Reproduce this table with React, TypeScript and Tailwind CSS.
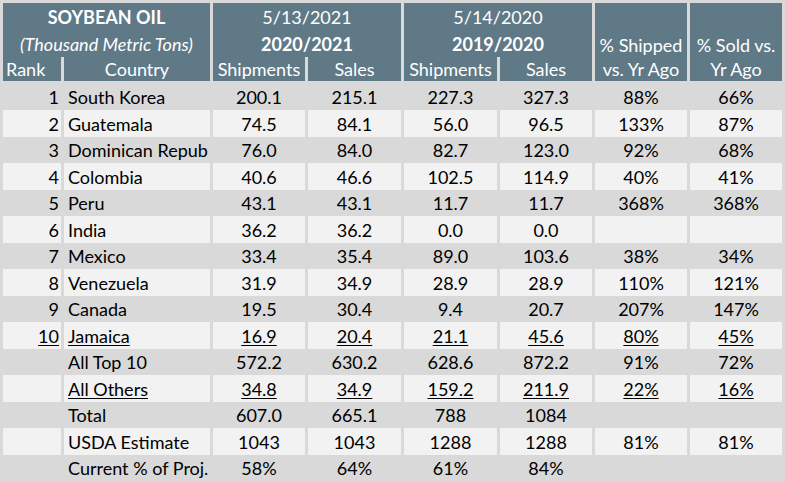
const HEAD = 'bg-[#5f7987] text-white';
const COLS = 'grid grid-cols-[58px_146px_92px_93px_93px_92px_92px_92px] gap-x-[3px]';

type Row = {
  rank: string;
  country: string;
  vals: string[];
  light: boolean;
  underline?: boolean;
};

const ROWS: Row[] = [
  { rank: '1', country: 'South Korea', vals: ['200.1', '215.1', '227.3', '327.3', '88%', '66%'], light: false },
  { rank: '2', country: 'Guatemala', vals: ['74.5', '84.1', '56.0', '96.5', '133%', '87%'], light: true },
  // the sheet clips the long name at the column edge
  { rank: '3', country: 'Dominican Repub', vals: ['76.0', '84.0', '82.7', '123.0', '92%', '68%'], light: false },
  { rank: '4', country: 'Colombia', vals: ['40.6', '46.6', '102.5', '114.9', '40%', '41%'], light: true },
  { rank: '5', country: 'Peru', vals: ['43.1', '43.1', '11.7', '11.7', '368%', '368%'], light: false },
  { rank: '6', country: 'India', vals: ['36.2', '36.2', '0.0', '0.0', '', ''], light: true },
  { rank: '7', country: 'Mexico', vals: ['33.4', '35.4', '89.0', '103.6', '38%', '34%'], light: false },
  { rank: '8', country: 'Venezuela', vals: ['31.9', '34.9', '28.9', '28.9', '110%', '121%'], light: true },
  { rank: '9', country: 'Canada', vals: ['19.5', '30.4', '9.4', '20.7', '207%', '147%'], light: false },
  { rank: '10', country: 'Jamaica', vals: ['16.9', '20.4', '21.1', '45.6', '80%', '45%'], light: true, underline: true },
  { rank: '', country: 'All Top 10', vals: ['572.2', '630.2', '628.6', '872.2', '91%', '72%'], light: false },
  { rank: '', country: 'All Others', vals: ['34.8', '34.9', '159.2', '211.9', '22%', '16%'], light: true, underline: true },
  { rank: '', country: 'Total', vals: ['607.0', '665.1', '788', '1084', '', ''], light: false },
  { rank: '', country: 'USDA Estimate', vals: ['1043', '1043', '1288', '1288', '81%', '81%'], light: true },
  { rank: '', country: 'Current % of Proj.', vals: ['58%', '64%', '61%', '84%', '', ''], light: false },
];

function Txt({ children, u }: { children: string; u?: boolean }) {
  return <span className={u ? 'underline underline-offset-[2px] decoration-1' : ''}>{children}</span>;
}

export default function App() {
  return (
    <div
      className="w-[785px] h-[482px] overflow-hidden bg-[#d9d9d9] px-[3px] pt-[3px] text-[18px] text-black"
      style={{ fontFamily: 'Lato, "Liberation Sans", sans-serif' }}
    >
      {/* header block */}
      <div className={`${COLS} grid-rows-[27px_27px_24px] leading-none`}>
        <div className={`${HEAD} col-span-2 flex items-center justify-center font-bold`}>SOYBEAN OIL</div>
        <div className={`${HEAD} col-span-2 flex items-center justify-center`}>5/13/2021</div>
        <div className={`${HEAD} col-span-2 flex items-center justify-center`}>5/14/2020</div>
        <div className={`${HEAD} row-span-3 flex flex-col items-center justify-end pb-[3px] gap-[6px]`}>
          <span>% Shipped</span>
          <span>vs. Yr Ago</span>
        </div>
        <div className={`${HEAD} row-span-3 flex flex-col items-center justify-end pb-[3px] gap-[6px]`}>
          <span>% Sold vs.</span>
          <span>Yr Ago</span>
        </div>

        <div className={`${HEAD} col-span-2 flex items-center justify-center italic`}>(Thousand Metric Tons)</div>
        <div className={`${HEAD} col-span-2 flex items-center justify-center font-bold`}>2020/2021</div>
        <div className={`${HEAD} col-span-2 flex items-center justify-center font-bold`}>2019/2020</div>

        <div className={`${HEAD} flex items-center pl-[3px]`}>Rank</div>
        <div className={`${HEAD} flex items-center justify-center`}>Country</div>
        <div className={`${HEAD} flex items-center justify-center`}>Shipments</div>
        <div className={`${HEAD} flex items-center justify-center`}>Sales</div>
        <div className={`${HEAD} flex items-center justify-center`}>Shipments</div>
        <div className={`${HEAD} flex items-center justify-center`}>Sales</div>
      </div>

      {/* body rows */}
      <div className="mt-[2px] flex flex-col gap-[1.5px]">
        {ROWS.map((r, i) => {
          const bg = r.light ? 'bg-[#f2f2f2]' : '';
          return (
            <div key={i} className={`${COLS} h-[25px] leading-[25px]`}>
              <div className={`${bg} text-right pr-[2px] pt-[2px]`}>
                <Txt u={r.underline}>{r.rank}</Txt>
              </div>
              <div className={`${bg} pl-[4px] pt-[2px] whitespace-nowrap overflow-hidden`}>
                <Txt u={r.underline}>{r.country}</Txt>
              </div>
              {r.vals.map((v, j) => (
                <div key={j} className={`${bg} text-center pt-[2px]`}>
                  <Txt u={r.underline}>{v}</Txt>
                </div>
              ))}
            </div>
          );
        })}
      </div>
    </div>
  );
}
